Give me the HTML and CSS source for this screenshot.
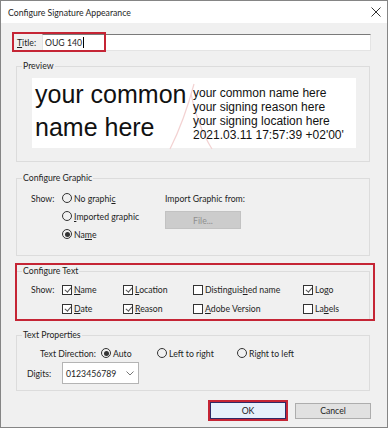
FILE: index.html
```html
<!DOCTYPE html>
<html lang="en">
<head>
  <meta charset="UTF-8" />
  <title>Configure Signature Appearance</title>
  <link rel="stylesheet" href="styles.css">
</head>
<body>
  <div class="window">
    <div class="titlebar">
      <span>Configure Signature Appearance</span>
      <svg class="close" width="10" height="10" viewBox="0 0 10 10">
        <path d="M0.5 0.5 L9.5 9.5 M9.5 0.5 L0.5 9.5" stroke="#333" stroke-width="1" fill="none"/>
      </svg>
    </div>

    <div class="content">
      <div class="title-row">
        <label class="title-label"><u>T</u>itle:</label>
        <div class="text-input">OUG 140<span class="caret"></span></div>
        <span class="mark mark-title"></span>
      </div>

      <fieldset class="group">
        <legend>Preview</legend>
        <div class="group-body preview-body">
          <div class="preview">
            <svg class="acrobat" width="60" height="70" viewBox="0 0 60 70">
              <path d="M34 3 C 30 18, 24 40, 10 68 M31 12 C 34 30, 42 52, 52 68" stroke="#f3d2d2" stroke-width="1.2" fill="none"/>
            </svg>
            <div class="big-name">your common<br>name here</div>
            <div class="details">
              your common name here<br>
              your signing reason here<br>
              your signing location here<br>
              2021.03.11 17:57:39 +02'00'
            </div>
          </div>
        </div>
      </fieldset>

      <fieldset class="group graphic-group">
        <legend>Configure Graphic</legend>
        <div class="group-body graphic-body">
          <span class="show">Show:</span>
          <span class="opt"><span class="radio"></span><span>No graphi<u>c</u></span></span>
          <span class="import-label">Import Graphic from:</span>
          <span class="opt row2"><span class="radio"></span><span><u>I</u>mported graphic</span></span>
          <button class="file-btn" disabled>File...</button>
          <span class="opt row3"><span class="radio checked"></span><span>Na<u>m</u>e</span></span>
        </div>
      </fieldset>

      <div class="highlight">
        <fieldset class="group">
          <legend>Configure Text</legend>
          <div class="group-body text-body">
            <span class="show">Show:</span>
            <span class="opt"><span class="check on"></span><span><u>N</u>ame</span></span>
            <span class="opt"><span class="check on"></span><span><u>L</u>ocation</span></span>
            <span class="opt"><span class="check"></span><span>Distinguis<u>h</u>ed name</span></span>
            <span class="opt"><span class="check on"></span><span>Lo<u>g</u>o</span></span>
            <span></span>
            <span class="opt"><span class="check on"></span><span><u>D</u>ate</span></span>
            <span class="opt"><span class="check on"></span><span><u>R</u>eason</span></span>
            <span class="opt"><span class="check"></span><span><u>A</u>dobe Version</span></span>
            <span class="opt"><span class="check"></span><span>La<u>b</u>els</span></span>
          </div>
        </fieldset>
      </div>

      <fieldset class="group">
        <legend>Text Properties</legend>
        <div class="group-body props-body">
          <div class="dir-row">
            <span class="dir-label">Text Direction:</span>
            <span class="opt dir-auto"><span class="radio checked"></span><span>Auto</span></span>
            <span class="opt dir-ltr"><span class="radio"></span><span>Left to right</span></span>
            <span class="opt"><span class="radio"></span><span>Right to left</span></span>
          </div>
          <div class="digits-row">
            <span class="digits-label">Digits:</span>
            <div class="select">
              <span>0123456789</span>
              <svg width="8" height="5" viewBox="0 0 8 5">
                <path d="M0.5 0.5 L4 4 L7.5 0.5" stroke="#777" stroke-width="1" fill="none"/>
              </svg>
            </div>
          </div>
        </div>
      </fieldset>

      <div class="buttons">
        <button class="btn ok">OK</button>
        <button class="btn">Cancel</button>
      </div>
    </div>
  </div>
</body>
</html>
```

FILE: styles.css
```css
body {
  margin: 0;
  background: #fff;
  font-family: Lato, "Noto Sans", sans-serif;
  font-size: 8.7px;
  color: #1e1e1e;
}
.window {
  width: 386px;
  height: 426px;
  border: 1px solid #858585;
  background: #f0f0f0;
}
.titlebar {
  height: 22px;
  background: #fff;
  display: flex;
  align-items: center;
  justify-content: space-between;
  padding: 0 6px 0 7px;
  font-size: 8.7px;
}
.content {
  padding: 0 17px 0 15px;
}
u { text-decoration-thickness: 1px; text-underline-offset: 1px; }

/* title row */
.title-row {
  position: relative;
  display: flex;
  align-items: center;
  height: 17px;
  margin-top: 11px;
  margin-right: -1px;
}
.title-label {
  width: 25px;
  padding-left: 1px;
}
.text-input {
  flex: 1;
  height: 17px;
  box-sizing: border-box;
  display: flex;
  align-items: center;
  padding-left: 2px;
  background: #fff;
  border: 1px solid #e4e4e4;
  border-top-color: #7a7a7a;
}
.caret {
  display: inline-block;
  width: 1px;
  height: 11px;
  background: #000;
  margin-left: 1px;
}
.mark {
  position: absolute;
  box-sizing: border-box;
  border: 2px solid #c52535;
}
.mark-title {
  left: -4px;
  top: -2px;
  width: 94px;
  height: 20px;
}

/* group boxes */
.group {
  margin: 10px 0 0 0;
  padding: 0;
  border: 1px solid #dcdcdc;
  min-width: 0;
}
.group legend {
  margin-left: 5px;
  padding: 0 1px;
  line-height: 10px;
}
.preview-body {
  padding: 7px 13px 13px 15px;
}
.preview {
  position: relative;
  height: 70px;
  background: #fff;
  display: flex;
  font-family: "Liberation Sans", Arial, sans-serif;
  color: #111;
}
.acrobat {
  position: absolute;
  left: 128px;
  top: 3px;
}
.big-name {
  position: relative;
  width: 158px;
  padding-left: 3px;
  font-size: 25px;
  line-height: 33px;
}
.details {
  position: relative;
  padding-top: 8px;
  font-size: 12px;
  line-height: 14px;
}

.opt {
  display: flex;
  align-items: center;
  gap: 2px;
  white-space: nowrap;
}
.radio {
  width: 10px;
  height: 10px;
  box-sizing: border-box;
  border: 1px solid #333;
  border-radius: 50%;
  display: flex;
  align-items: center;
  justify-content: center;
  flex: none;
}
.radio.checked::after {
  content: "";
  width: 5px;
  height: 5px;
  border-radius: 50%;
  background: #333;
}
.check {
  width: 10px;
  height: 10px;
  box-sizing: border-box;
  border: 1px solid #333;
  background: #fff;
  flex: none;
  position: relative;
}
.check.on::after {
  content: "";
  position: absolute;
  left: 2.5px;
  top: 0.5px;
  width: 2.5px;
  height: 5px;
  border: solid #555;
  border-width: 0 1px 1px 0;
  transform: rotate(40deg);
}

.graphic-group { margin-top: 11px; }
.graphic-body {
  display: grid;
  grid-template-columns: 31px 103px auto;
  grid-auto-rows: 18px;
  align-items: center;
  padding: 6px 0 12px 14px;
}
.graphic-body .row2 { grid-column: 2; grid-row: 2; }
.graphic-body .row3 { grid-column: 2; grid-row: 3; }
.file-btn {
  grid-column: 3;
  grid-row: 2 / span 2;
  align-self: start;
  margin-top: 4px;
  width: 76px;
  height: 18px;
  background: #cccccc;
  border: 1px solid #c2c2c2;
  color: #8f8f8f;
  font: inherit;
  padding: 0;
}

.highlight {
  position: relative;
}
.highlight::after {
  content: "";
  position: absolute;
  top: -3px;
  bottom: -1px;
  left: -1px;
  right: -5px;
  border: 2px solid #c52535;
}
.highlight .group { margin-top: 10px; }
.text-body {
  display: grid;
  grid-template-columns: 31px 61px 70px 110px auto;
  grid-auto-rows: 19px;
  align-items: center;
  padding: 4px 0 1px 14px;
}

.props-body {
  padding: 4px 0 6px 0;
}
.dir-row {
  display: flex;
  align-items: center;
  height: 18px;
  padding-left: 23px;
}
.dir-label { width: 61px; }
.dir-auto { width: 56px; }
.dir-ltr { width: 80px; }
.digits-row {
  display: flex;
  align-items: center;
  height: 22px;
  padding-left: 10px;
}
.digits-label { width: 35px; }
.select {
  width: 77px;
  height: 22px;
  box-sizing: border-box;
  border: 1px solid #b4b4b4;
  background: #fff;
  display: flex;
  align-items: center;
  justify-content: space-between;
  padding: 0 4px 0 3px;
}

.buttons {
  display: flex;
  justify-content: flex-end;
  align-items: center;
  gap: 9px;
  margin-top: 11px;
  margin-right: -1px;
}
.btn {
  width: 76px;
  height: 16px;
  padding: 0;
  font: inherit;
  color: #1e1e1e;
  background: #e1e1e1;
  border: 1px solid #adadad;
}
.btn.ok {
  height: 17px;
  background: #e5f1fb;
  border-color: #2e2a66;
  outline: 2px solid #c52535;
}
```
